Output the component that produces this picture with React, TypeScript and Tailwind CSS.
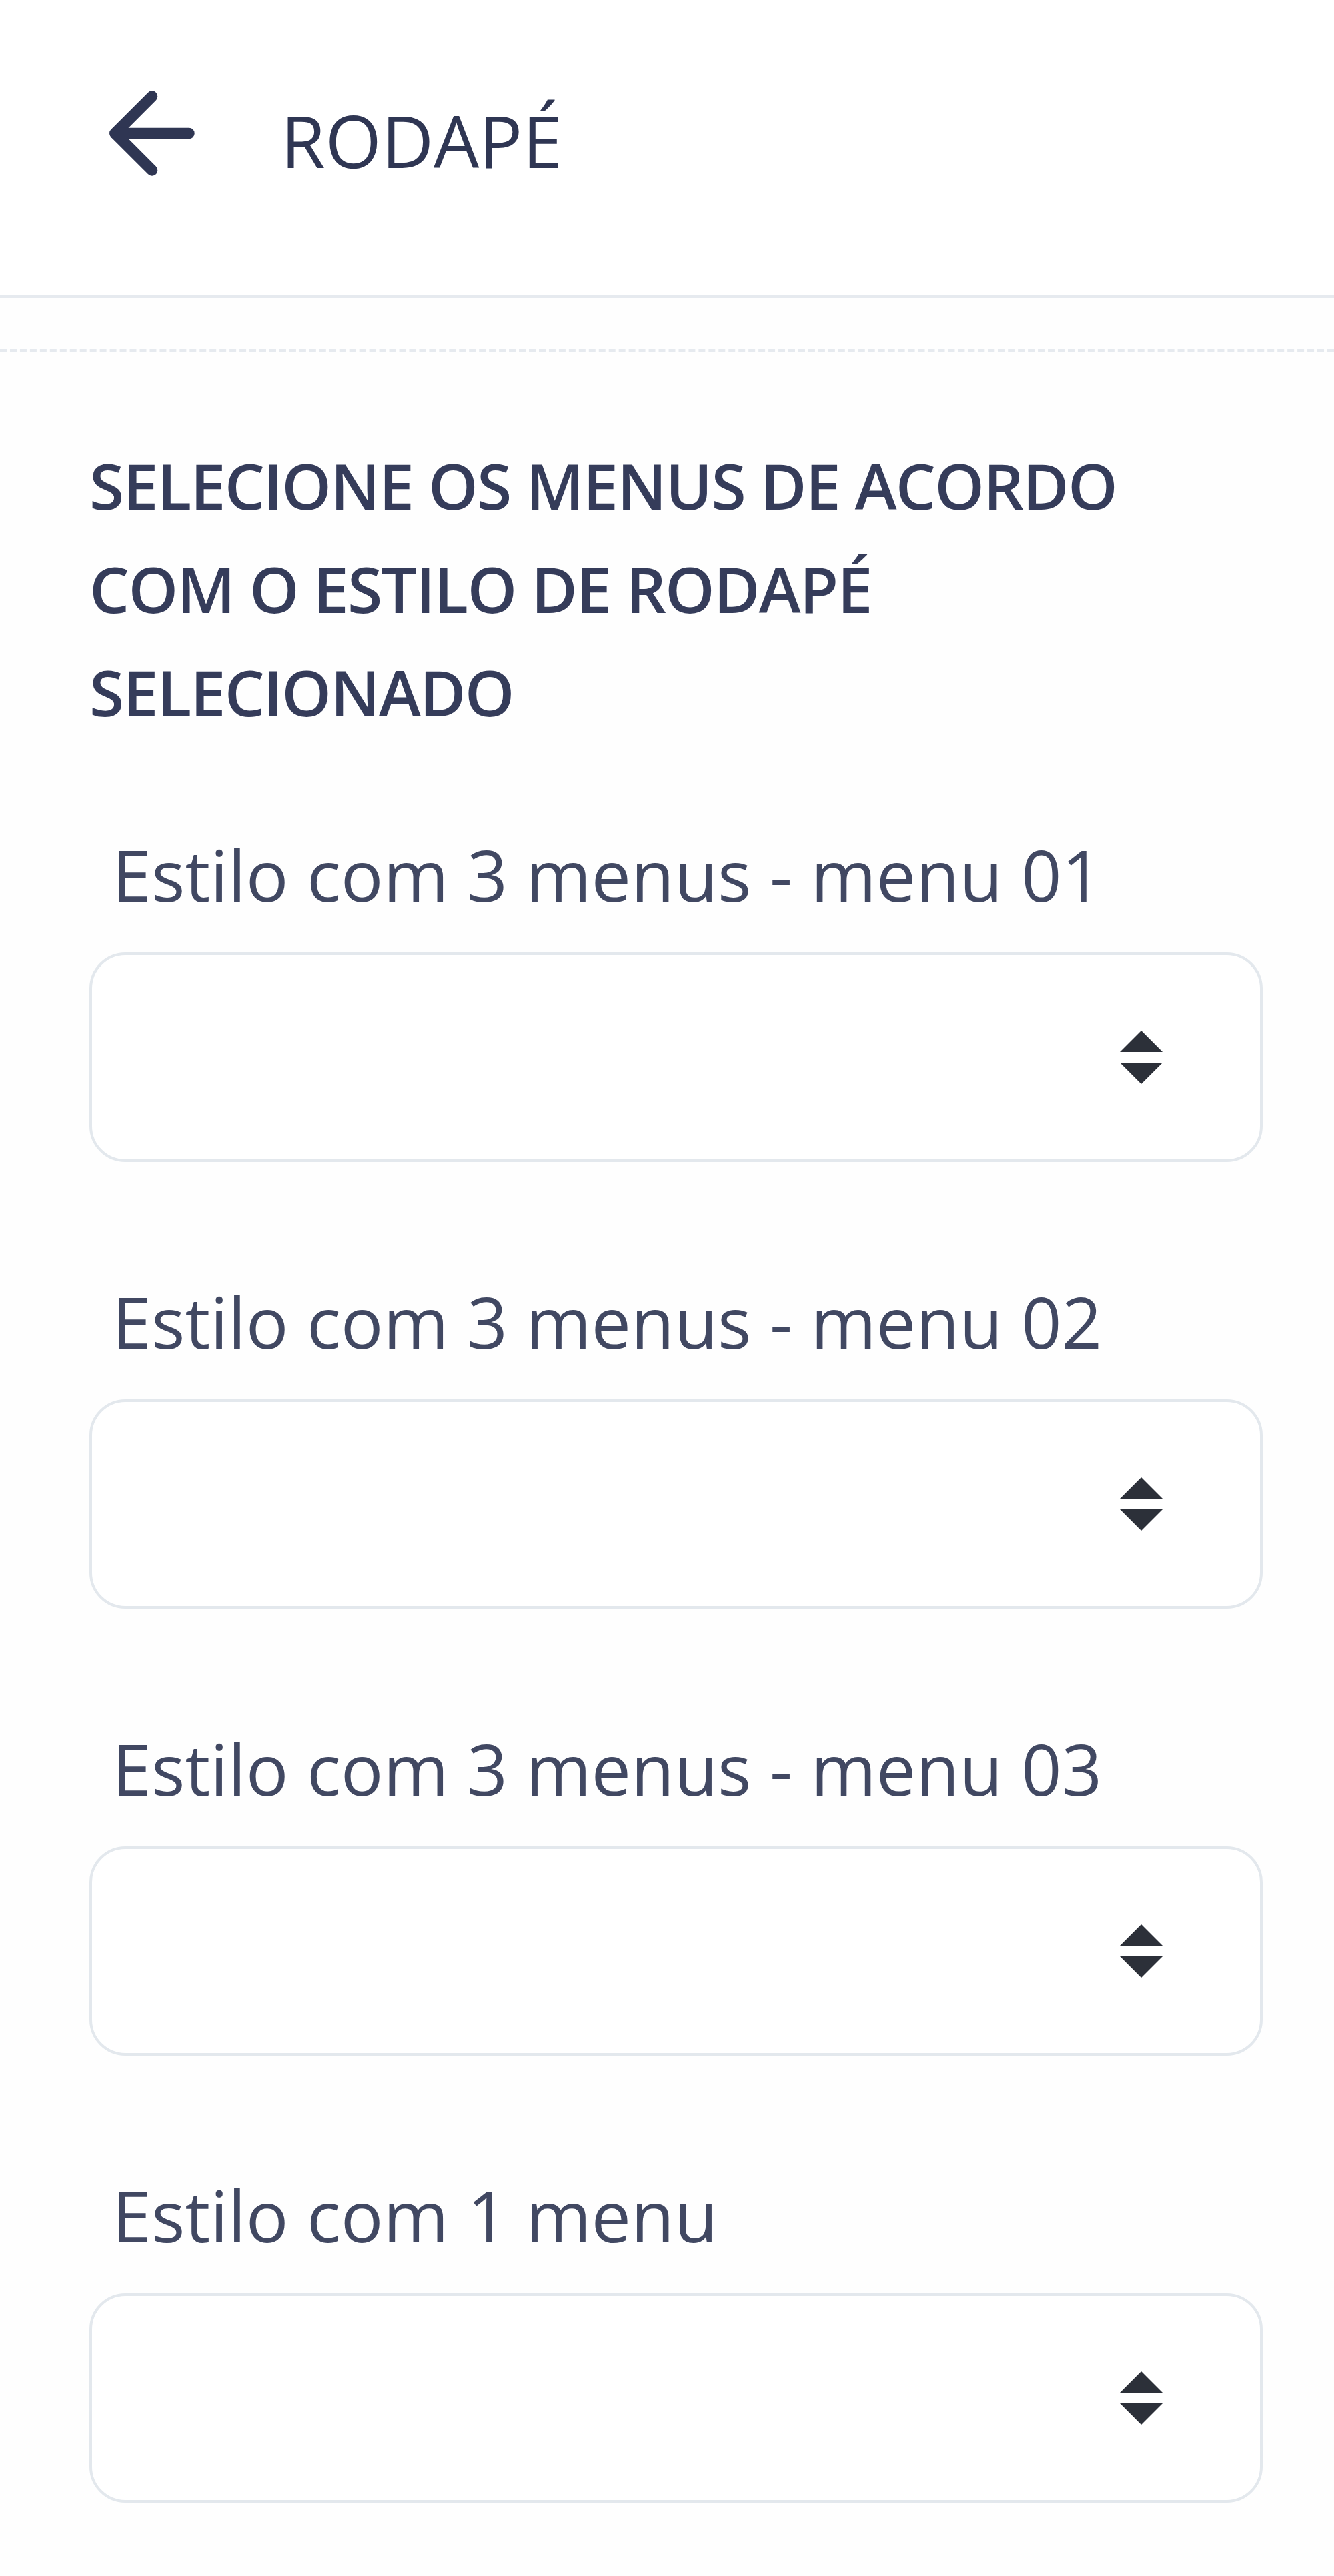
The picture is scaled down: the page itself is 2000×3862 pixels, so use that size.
import { ArrowLeft } from "lucide-react";

const fields = [
  "Estilo com 3 menus - menu 01",
  "Estilo com 3 menus - menu 02",
  "Estilo com 3 menus - menu 03",
  "Estilo com 1 menu",
];

function SortIcon() {
  return (
    <svg width="64" height="80" viewBox="0 0 64 80" className="text-[#2c3039]">
      <polygon points="32,0 64,32 0,32" fill="currentColor" />
      <polygon points="0,48 64,48 32,80" fill="currentColor" />
    </svg>
  );
}

export default function App() {
  return (
    <div className="min-h-[3862px] bg-[#fefefe] font-['Open_Sans',sans-serif] text-[#353c5a]">
      {/* Header */}
      <header className="h-[447px] bg-white border-b-[5px] border-[#e6eaef] flex items-center pl-[133px] pb-[42px]">
        <ArrowLeft size={190} strokeWidth={2.1} className="text-[#2f3653]" />
        <h1 className="ml-[98px] mt-[22px] text-[108px] leading-none text-[#2f3653]">RODAPÉ</h1>
      </header>

      <div className="mt-[76px] border-t-[5px] border-dashed border-[#e6eaef]" />

      <main className="px-[134px] pr-[107px] pt-[122px]">
        <h2 className="text-[95px] leading-[155px] font-semibold tracking-[-1.8px] text-[#353c5a]">
          SELECIONE OS MENUS DE ACORDO
          <br />
          COM O ESTILO DE RODAPÉ
          <br />
          SELECIONADO
        </h2>

        <div className="mt-[118px] flex flex-col gap-[161px]">
          {fields.map((label) => (
            <div key={label} className="flex flex-col">
              <label className="pl-[34px] text-[106px] leading-[156px] text-[#414862]">{label}</label>
              <div className="mt-[39px] h-[314px] rounded-[54px] border-4 border-[#e3e8ed] bg-white flex items-center justify-end pr-[146px]">
                <SortIcon />
              </div>
            </div>
          ))}
        </div>
      </main>
    </div>
  );
}
